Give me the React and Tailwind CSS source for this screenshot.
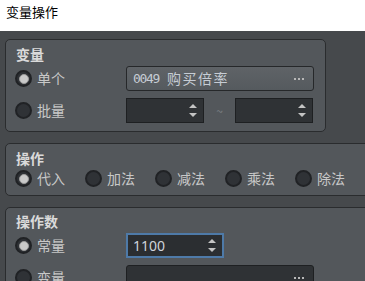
import React from "react";

const cjk = { fontFamily: '"Noto Sans CJK SC", "Noto Sans", sans-serif' };

function Radio({ checked, label }) {
  return (
    <div className="flex items-center gap-[5px]">
      <div className="w-[17px] h-[17px] rounded-full bg-[#2f3236] border-2 border-[#202225] flex items-center justify-center shrink-0">
        {checked && <div className="w-[10px] h-[10px] rounded-full bg-[#c9c9c9] border border-[#9a9a9a]" />}
      </div>
      {label && <span className="text-[14px] leading-[17px] text-[#c8c8c8]" style={cjk}>{label}</span>}
    </div>
  );
}

function Arrows() {
  return (
    <div className="flex flex-col gap-[5px] items-center">
      <div className="w-0 h-0 border-l-[4px] border-r-[4px] border-b-[4px] border-l-transparent border-r-transparent border-b-[#c4c4c4]" />
      <div className="w-0 h-0 border-l-[4px] border-r-[4px] border-t-[4px] border-l-transparent border-r-transparent border-t-[#c4c4c4]" />
    </div>
  );
}

function Dots() {
  return (
    <div className="flex gap-[2px]">
      <div className="w-[2px] h-[2px] bg-[#b8b8b8]" />
      <div className="w-[2px] h-[2px] bg-[#b8b8b8]" />
      <div className="w-[2px] h-[2px] bg-[#b8b8b8]" />
    </div>
  );
}

function Spin({ w }) {
  return (
    <div className={`${w} h-[25px] bg-[#2f3235] border border-[#1e2022] flex items-center justify-end pr-[6px]`}>
      <Arrows />
    </div>
  );
}

function GroupTitle({ children }) {
  return (
    <div className="text-[14px] leading-[16px] font-bold text-[#dadada] pl-[5px]" style={cjk}>{children}</div>
  );
}

export default function App() {
  return (
    <div className="w-[365px] h-[281px] overflow-hidden bg-[#46494c] flex flex-col">
      <div className="h-[31px] bg-white pl-[6px] pt-[3px] text-[13px] leading-[18px] text-black shrink-0" style={cjk}>
        变量操作
      </div>
      <div className="flex flex-col pl-[5px] pt-[8px] gap-[11px]">
        {/* Group 1 */}
        <div className="w-[321px] h-[93px] shrink-0 border border-[#2a2c2e] rounded-[5px] bg-[#53575b] pt-[6px] pl-[5px] flex flex-col">
          <GroupTitle>变量</GroupTitle>
          <div className="flex items-center h-[25px] mt-[4px] pl-[4px]">
            <div className="w-[111px]"><Radio checked label="单个" /></div>
            <div className="w-[188px] h-[25px] rounded-[3px] border border-[#26282a] bg-gradient-to-b from-[#5f6367] to-[#555a5e] flex items-center pl-[6px] pr-[9px]">
              <span className="text-[13px] tracking-[-1.3px] text-[#c6ccd4]" style={{ fontFamily: '"DejaVu Sans Mono", monospace' }}>0049</span>
              <span className="text-[14px] tracking-[1.5px] text-[#c6ccd4] ml-[8px]" style={cjk}>购买倍率</span>
              <div className="flex-1" />
              <Dots />
            </div>
          </div>
          <div className="flex items-center h-[25px] mt-[7px] pl-[4px]">
            <div className="w-[111px]"><Radio label="批量" /></div>
            <Spin w="w-[78px]" />
            <div className="w-[31px] text-center text-[12px] text-[#7c8084]" style={cjk}>~</div>
            <Spin w="w-[78px]" />
          </div>
        </div>

        {/* Group 2 */}
        <div className="w-[420px] h-[53px] shrink-0 border border-[#2a2c2e] rounded-[5px] bg-[#53575b] pt-[6px] pl-[5px] flex flex-col">
          <GroupTitle>操作</GroupTitle>
          <div className="flex items-center h-[17px] mt-[4px] pl-[4px]">
            <div className="w-[70px] shrink-0"><Radio checked label="代入" /></div>
            <div className="w-[70px] shrink-0"><Radio label="加法" /></div>
            <div className="w-[70px] shrink-0"><Radio label="减法" /></div>
            <div className="w-[70px] shrink-0"><Radio label="乘法" /></div>
            <div className="w-[70px] shrink-0"><Radio label="除法" /></div>
            <div className="w-[70px] shrink-0"><Radio /></div>
          </div>
        </div>

        {/* Group 3 */}
        <div className="w-[420px] h-[120px] shrink-0 border border-[#2a2c2e] rounded-[5px] bg-[#53575b] pt-[5px] pl-[5px] flex flex-col">
          <GroupTitle>操作数</GroupTitle>
          <div className="flex items-center h-[25px] mt-[4px] pl-[4px]">
            <div className="w-[111px]"><Radio checked label="常量" /></div>
            <div className="w-[98px] h-[25px] bg-[#2b2e31] border-2 border-[#4e7aa8] flex items-center pl-[5px] pr-[6px]">
              <span className="text-[14px] text-[#cfd4da]" style={{ fontFamily: '"Noto Sans", sans-serif' }}>1100</span>
              <div className="flex-1" />
              <Arrows />
            </div>
          </div>
          <div className="flex items-center h-[25px] mt-[7px] pl-[4px]">
            <div className="w-[111px]"><Radio label="变量" /></div>
            <div className="w-[188px] h-[25px] rounded-[3px] border border-[#1e2022] bg-[#2f3235] flex items-center justify-end pr-[9px]">
              <Dots />
            </div>
          </div>
        </div>
      </div>
    </div>
  );
}
